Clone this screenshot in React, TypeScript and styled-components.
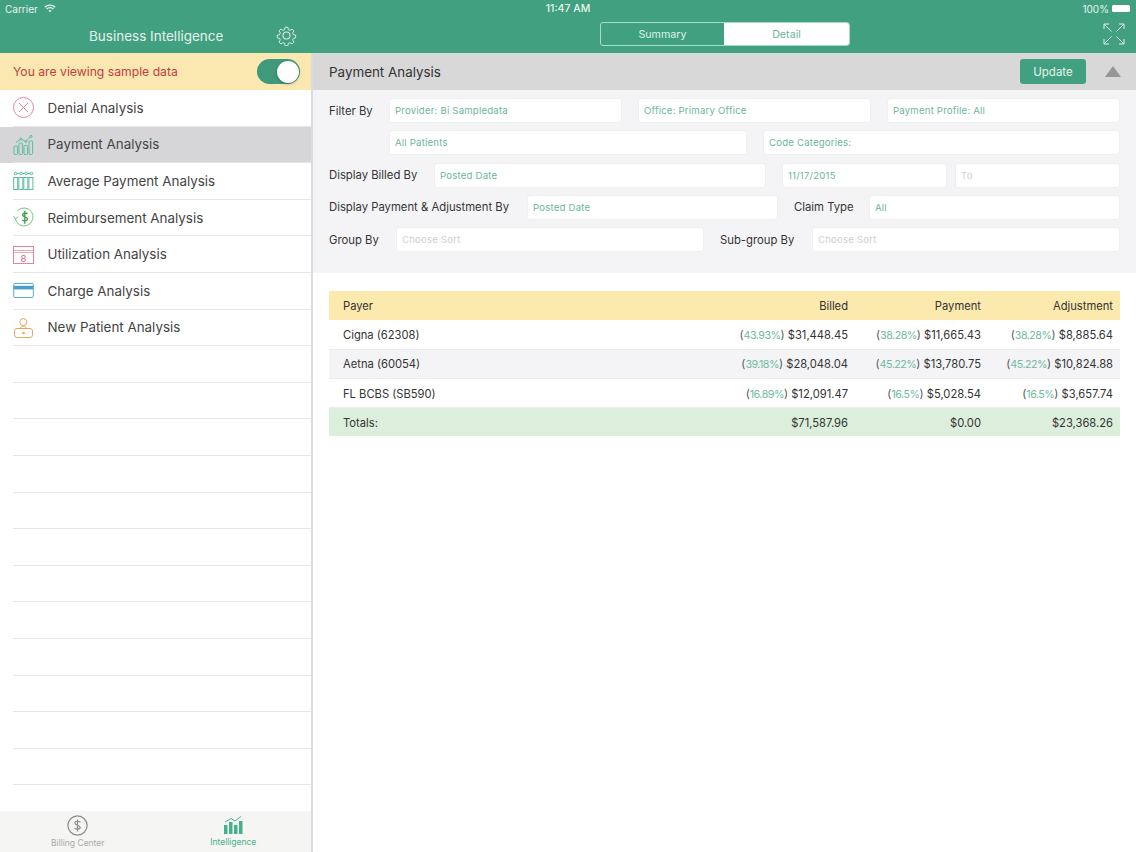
import React from "react";
import styled, { createGlobalStyle } from "styled-components";

const GlobalStyle = createGlobalStyle`
  html, body {
    margin: 0;
    padding: 0;
    background: #fff;
    font-family: Inter, "Noto Sans", "Liberation Sans", sans-serif;
  }
  * { box-sizing: border-box; }
`;

const Page = styled.div`
  width: 1136px;
  height: 852px;
  display: flex;
  flex-direction: column;
  overflow: hidden;
`;

const TopBar = styled.header`
  height: 53px;
  flex: none;
  background: #41a07f;
  color: #fff;
  display: flex;
  flex-direction: column;
`;

const StatusBar = styled.div`
  height: 17px;
  padding: 0 5px;
  display: grid;
  grid-template-columns: 1fr auto 1fr;
  align-items: center;
  font-size: 10px;
  color: #e9f5f0;
`;

const StatusLeft = styled.div`
  display: flex;
  align-items: center;
  gap: 6px;
`;

const Clock = styled.div`
  font-weight: 500;
  font-size: 10.5px;
`;

const StatusRight = styled.div`
  display: flex;
  align-items: center;
  justify-content: flex-end;
  gap: 3px;
`;

const Battery = styled.div`
  width: 18px;
  height: 7px;
  background: #fff;
  border-radius: 1.5px;
  margin-right: 1px;
`;

const NavBar = styled.div`
  flex: 1;
  display: flex;
  align-items: center;
`;

const NavLeft = styled.div`
  width: 312px;
  flex: none;
  display: flex;
  align-items: center;
  padding-left: 89px;
  padding-right: 15px;
  padding-top: 1px;
  justify-content: space-between;
`;

const NavTitle = styled.div`
  font-size: 13.5px;
  color: #e6f4ee;
`;

const NavRight = styled.div`
  flex: 1;
  display: flex;
  align-items: center;
  justify-content: space-between;
  padding-left: 288px;
  padding-right: 11px;
`;

const Segments = styled.div`
  width: 250px;
  height: 24px;
  display: flex;
  border: 1px solid #a6dcc8;
  border-radius: 3px;
  overflow: hidden;
  margin-bottom: 2px;
`;

const Segment = styled.div<{ $active?: boolean }>`
  flex: ${(p) => (p.$active ? "0 0 125px" : "1")};
  display: flex;
  align-items: center;
  justify-content: center;
  font-size: 10.7px;
  background: ${(p) => (p.$active ? "#fff" : "transparent")};
  color: ${(p) => (p.$active ? "#6fb59c" : "#dff1ea")};
`;

const ExpandWrap = styled.div`
  margin-bottom: 3px;
  svg {
    display: block;
  }
`;

const Body = styled.div`
  flex: 1;
  display: flex;
  min-height: 0;
`;

const Sidebar = styled.aside`
  width: 313px;
  flex: none;
  border-right: 2px solid #dcdcde;
  display: flex;
  flex-direction: column;
`;

const SampleBanner = styled.div`
  height: 37px;
  flex: none;
  background: #fbe8b0;
  padding: 0 11px 0 13px;
  display: flex;
  align-items: center;
  justify-content: space-between;
  font-size: 12.2px;
  color: #c43c44;
`;

const Toggle = styled.div`
  width: 43px;
  height: 25px;
  border-radius: 13px;
  background: #3f9a7b;
  padding: 1.5px;
  display: flex;
  justify-content: flex-end;
`;

const Knob = styled.div`
  width: 22px;
  height: 22px;
  border-radius: 50%;
  background: #fff;
  box-shadow: 0 1px 3px rgba(0, 0, 0, 0.3);
`;

const MenuList = styled.div`
  flex: 1;
  min-height: 0;
  overflow: hidden;
`;

const MenuRow = styled.div<{ $selected?: boolean }>`
  height: 36.6px;
  padding-left: 13px;
  background: ${(p) => (p.$selected ? "#d6d6d8" : "#fff")};
`;

const MenuInner = styled.div`
  height: 100%;
  display: flex;
  align-items: center;
  gap: 13.5px;
  border-bottom: 1px solid #e6e6e8;
`;

const IconSlot = styled.div`
  width: 21px;
  height: 21px;
  flex: none;
  svg {
    display: block;
  }
`;

const MenuLabel = styled.div`
  font-size: 13.4px;
  color: #444;
`;

const TabBar = styled.nav`
  height: 41px;
  flex: none;
  background: #f5f5f4;
  display: flex;
`;

const Tab = styled.div<{ $active?: boolean }>`
  flex: 1;
  display: flex;
  flex-direction: column;
  align-items: center;
  padding-top: 4px;
  font-size: 8.5px;
  gap: 2px;
  color: ${(p) => (p.$active ? "#46b08c" : "#aaa")};
`;

const Main = styled.main`
  flex: 1;
  min-width: 0;
  display: flex;
  flex-direction: column;
`;

const MainHeader = styled.div`
  height: 37px;
  flex: none;
  background: #d8d8d8;
  padding: 0 14px 0 16px;
  display: flex;
  align-items: center;
  justify-content: space-between;
  font-size: 13.4px;
  color: #333;
`;

const HeaderActions = styled.div`
  display: flex;
  align-items: center;
  gap: 19px;
`;

const UpdateButton = styled.div`
  width: 66px;
  height: 25px;
  margin-left: -1px;
  background: #41a07f;
  color: #e6f4ee;
  border-radius: 3px;
  font-size: 11.5px;
  display: flex;
  align-items: center;
  justify-content: center;
`;

const Collapse = styled.div`
  width: 0;
  height: 0;
  margin-right: 1px;
  border-left: 8.5px solid transparent;
  border-right: 8.5px solid transparent;
  border-bottom: 11px solid #969696;
`;

const FilterPanel = styled.section`
  height: 183px;
  flex: none;
  background: #f4f4f6;
  padding: 8px 16px 0;
  display: flex;
  flex-direction: column;
  gap: 7.3px;
`;

const FilterRow = styled.div`
  display: flex;
  align-items: center;
  height: 25px;
`;

const FieldLabel = styled.div<{ $w: number }>`
  flex: 0 0 ${(p) => p.$w}px;
  font-size: 11.3px;
  color: #333;
  white-space: nowrap;
`;

const Field = styled.div<{ $w: number; $gap?: number; $muted?: boolean }>`
  flex: 0 0 ${(p) => p.$w}px;
  margin-right: ${(p) => p.$gap ?? 0}px;
  height: 25px;
  background: #fff;
  border: 1px solid #efeff1;
  border-radius: 3px;
  padding: 0 5px;
  display: flex;
  align-items: center;
  font-size: 9.6px;
  letter-spacing: 0.2px;
  color: ${(p) => (p.$muted ? "#d0d0d2" : "#6cb69b")};
`;

const TableArea = styled.section`
  padding: 18px 16px 0;
`;

const Row = styled.div<{ $kind?: "head" | "alt" | "total" }>`
  height: ${(p) => (p.$kind === "total" ? 28 : 29.3)}px;
  display: grid;
  grid-template-columns: 1fr 133px 133px 132px;
  align-items: center;
  padding: 1px 7px 0 14px;
  font-size: 11.2px;
  color: #333;
  border-bottom: ${(p) =>
    p.$kind === "head" || p.$kind === "total" ? "none" : "1px solid #ececee"};
  background: ${(p) =>
    p.$kind === "head"
      ? "#fbe9ae"
      : p.$kind === "alt"
        ? "#f4f4f6"
        : p.$kind === "total"
          ? "#dcefdc"
          : "#fff"};
`;

const Num = styled.div`
  text-align: right;
  white-space: nowrap;
`;

const Pct = styled.span`
  color: #6fbb9f;
  font-size: 10.7px;
  letter-spacing: -0.5px;
`;

const Paren = styled.span`
  color: #555;
`;

const Wifi = () => (
  <svg width="12" height="9" viewBox="0 0 12 9" fill="none" stroke="#e9f5f0" strokeWidth="1.3">
    <path d="M.8 3.2a7.4 7.4 0 0 1 10.4 0M2.6 5a4.8 4.8 0 0 1 6.8 0" />
    <path d="M4.5 6.7a2.2 2.2 0 0 1 3 0L6 8.3z" fill="#e9f5f0" stroke="none" />
  </svg>
);

const Gear = () => (
  <svg width="21" height="21" viewBox="0 0 24 24" fill="none" stroke="#dff1ea" strokeWidth="1.2" strokeLinejoin="round">
    <circle cx="12" cy="12" r="4" />
    <path d="M10.2 1.5h3.6l.6 3 2.1.9 2.6-1.7 2.5 2.5-1.7 2.6.9 2.1 3 .6v3.6l-3 .6-.9 2.1 1.7 2.6-2.5 2.5-2.6-1.7-2.1.9-.6 3h-3.6l-.6-3-2.1-.9-2.6 1.7-2.5-2.5 1.7-2.6-.9-2.1-3-.6v-3.6l3-.6.9-2.1-1.7-2.6 2.5-2.5 2.6 1.7 2.1-.9z" transform="translate(1.3 1.3) scale(.89)" />
  </svg>
);

const Expand = () => (
  <svg width="22" height="22" viewBox="0 0 22 22" fill="none" stroke="#dff1ea" strokeWidth="1">
    <path d="M1 6V1h5M1 1l7.500 7.500M16 1h5v5M21 1l-7.500 7.500M1 16v5h5M1 21l7.500-7.500M16 21h5v-5M21 21l-7.500-7.500" />
  </svg>
);

const DenialIcon = () => (
  <svg width="21" height="21" viewBox="0 0 21 21" fill="none" stroke="#e58592" strokeWidth="1">
    <circle cx="10.5" cy="10.5" r="10" />
    <path d="M6 6l9 9M15 6l-9 9" />
  </svg>
);

const PaymentIcon = () => (
  <svg width="21" height="21" viewBox="0 0 21 21" fill="none" stroke="#5bbd9b" strokeWidth="1">
    <rect x="1" y="12" width="3.6" height="8.500" rx="1" />
    <rect x="6" y="9" width="3.6" height="11.500" rx="1" />
    <rect x="11" y="11.500" width="3.6" height="9" rx="1" />
    <rect x="16" y="7" width="3.6" height="13.500" rx="1" />
    <path d="M2.800 8.500L7.800 5l5 2.500 5-5" />
    <circle cx="7.800" cy="5" r="1" fill="#d6d6d8" />
    <circle cx="12.800" cy="7.500" r="1" fill="#d6d6d8" />
    <circle cx="18" cy="2.300" r="1" fill="#d6d6d8" />
  </svg>
);

const AverageIcon = () => (
  <svg width="21" height="21" viewBox="0 0 21 21" fill="none" stroke="#5bbd9b" strokeWidth="1">
    <path d="M1 3.500h19" />
    <circle cx="2.500" cy="3.500" r="1.300" fill="#fff" />
    <circle cx="8" cy="3.500" r="1.300" fill="#fff" />
    <circle cx="13" cy="3.500" r="1.300" fill="#fff" />
    <circle cx="18.500" cy="3.500" r="1.300" fill="#fff" />
    <rect x=".7" y="7.500" width="4" height="12" />
    <rect x="5.800" y="7.500" width="4" height="12" />
    <rect x="10.800" y="7.500" width="4" height="12" />
    <rect x="15.900" y="7.500" width="4" height="12" />
  </svg>
);

const ReimburseIcon = () => (
  <svg width="21" height="21" viewBox="0 0 21 21" fill="none" stroke="#74c47c" strokeWidth="1">
    <path d="M4.500 3.800a9 9 0 1 1-2.300 7.700" />
    <path d="M.5 9.200L2.300 12l3-2.300" />
    <path d="M14.500 7c-.8-1.200-4.400-1.500-4.800.6-.5 2.700 5.100 2 4.700 4.800-.3 1.900-4.200 1.800-5.100.5M11.800 3.800v13" strokeWidth="1.400" stroke="#48a052" />
  </svg>
);

const CalendarIcon = () => (
  <svg width="21" height="21" viewBox="0 0 21 21" fill="none" stroke="#e58592" strokeWidth="1">
    <rect x=".5" y="2.500" width="20" height="17" />
    <path d="M.5 8.500h20M.5 6.500h20" strokeWidth=".7" />
    <text x="10.500" y="17.800" textAnchor="middle" fontSize="9.500" fontFamily="Inter" fill="#d9606e" stroke="none">8</text>
  </svg>
);

const CardIcon = () => (
  <svg width="21" height="21" viewBox="0 0 21 21" fill="none">
    <rect x=".7" y="3.500" width="19.600" height="14" rx="1.200" stroke="#5fa9d0" strokeWidth="1" />
    <rect x=".7" y="5.800" width="19.600" height="3.600" fill="#4b9fd0" />
  </svg>
);

const PatientIcon = () => (
  <svg width="21" height="21" viewBox="0 0 21 21" fill="none" stroke="#e8a657" strokeWidth="1">
    <circle cx="10.300" cy="5" r="3.500" />
    <rect x="1.500" y="11.500" width="18" height="9" rx="2.500" />
    <path d="M7 11.500c.5-1.500 1.800-2.200 3.300-2.200s2.800.7 3.300 2.200" />
    <circle cx="10.500" cy="16" r="1.300" fill="#e8a657" stroke="none" />
  </svg>
);

const DollarTab = () => (
  <svg width="21" height="21" viewBox="0 0 21 21" fill="none" stroke="#8c8c8c" strokeWidth="1.200">
    <circle cx="10.500" cy="10.500" r="9.600" />
    <path d="M13.400 7.300c-.7-1.300-5.300-1.700-5.500.7-.2 2.700 5.600 1.900 5.300 4.800-.2 1.800-4.700 1.800-5.700.3M10.500 4.600v11.800" />
  </svg>
);

const ChartTab = () => (
  <svg width="20" height="20" viewBox="0 0 20 20">
    <g fill="#46b08c">
      <rect x="1" y="10" width="3.500" height="9" />
      <rect x="6" y="7" width="3.500" height="12" />
      <rect x="11" y="10" width="3.500" height="9" />
      <rect x="16" y="6" width="3.500" height="13" />
    </g>
    <path d="M2 7l6-3.500 4 2.500 6-4.500" fill="none" stroke="#46b08c" strokeWidth="1" />
  </svg>
);

const menu = [
  { label: "Denial Analysis", icon: <DenialIcon /> },
  { label: "Payment Analysis", icon: <PaymentIcon />, selected: true },
  { label: "Average Payment Analysis", icon: <AverageIcon /> },
  { label: "Reimbursement Analysis", icon: <ReimburseIcon /> },
  { label: "Utilization Analysis", icon: <CalendarIcon /> },
  { label: "Charge Analysis", icon: <CardIcon /> },
  { label: "New Patient Analysis", icon: <PatientIcon /> },
];

const blanks = Array.from({ length: 12 }, (_, i) => i);

const rows = [
  { payer: "Cigna (62308)", cells: [["43.93%", "$31,448.45"], ["38.28%", "$11,665.43"], ["38.28%", "$8,885.64"]] },
  { payer: "Aetna (60054)", alt: true, cells: [["39.18%", "$28,048.04"], ["45.22%", "$13,780.75"], ["45.22%", "$10,824.88"]] },
  { payer: "FL BCBS (SB590)", cells: [["16.89%", "$12,091.47"], ["16.5%", "$5,028.54"], ["16.5%", "$3,657.74"]] },
];

export default function App() {
  return (
    <Page>
      <GlobalStyle />
      <TopBar>
        <StatusBar>
          <StatusLeft>
            Carrier <Wifi />
          </StatusLeft>
          <Clock>11:47 AM</Clock>
          <StatusRight>
            100% <Battery />
          </StatusRight>
        </StatusBar>
        <NavBar>
          <NavLeft>
            <NavTitle>Business Intelligence</NavTitle>
            <Gear />
          </NavLeft>
          <NavRight>
            <Segments>
              <Segment>Summary</Segment>
              <Segment $active>Detail</Segment>
            </Segments>
            <ExpandWrap>
              <Expand />
            </ExpandWrap>
          </NavRight>
        </NavBar>
      </TopBar>
      <Body>
        <Sidebar>
          <SampleBanner>
            You are viewing sample data
            <Toggle>
              <Knob />
            </Toggle>
          </SampleBanner>
          <MenuList>
            {menu.map((m) => (
              <MenuRow key={m.label} $selected={m.selected}>
                <MenuInner>
                  <IconSlot>{m.icon}</IconSlot>
                  <MenuLabel>{m.label}</MenuLabel>
                </MenuInner>
              </MenuRow>
            ))}
            {blanks.map((b) => (
              <MenuRow key={b}>
                <MenuInner />
              </MenuRow>
            ))}
          </MenuList>
          <TabBar>
            <Tab>
              <DollarTab />
              Billing Center
            </Tab>
            <Tab $active>
              <ChartTab />
              Intelligence
            </Tab>
          </TabBar>
        </Sidebar>
        <Main>
          <MainHeader>
            Payment Analysis
            <HeaderActions>
              <UpdateButton>Update</UpdateButton>
              <Collapse />
            </HeaderActions>
          </MainHeader>
          <FilterPanel>
            <FilterRow>
              <FieldLabel $w={60}>Filter By</FieldLabel>
              <Field $w={233} $gap={16}>Provider: Bi Sampledata</Field>
              <Field $w={233} $gap={16}>Office: Primary Office</Field>
              <Field $w={233}>Payment Profile: All</Field>
            </FilterRow>
            <FilterRow>
              <FieldLabel $w={60} />
              <Field $w={358} $gap={16}>All Patients</Field>
              <Field $w={357}>Code Categories:</Field>
            </FilterRow>
            <FilterRow>
              <FieldLabel $w={105}>Display Billed By</FieldLabel>
              <Field $w={332} $gap={16}>Posted Date</Field>
              <Field $w={165} $gap={8}>11/17/2015</Field>
              <Field $w={165} $muted>To</Field>
            </FilterRow>
            <FilterRow>
              <FieldLabel $w={198}>Display Payment &amp; Adjustment By</FieldLabel>
              <Field $w={251} $gap={16}>Posted Date</Field>
              <FieldLabel $w={75}>Claim Type</FieldLabel>
              <Field $w={251}>All</Field>
            </FilterRow>
            <FilterRow>
              <FieldLabel $w={67}>Group By</FieldLabel>
              <Field $w={308} $gap={16} $muted>Choose Sort</Field>
              <FieldLabel $w={92}>Sub-group By</FieldLabel>
              <Field $w={308} $muted>Choose Sort</Field>
            </FilterRow>
          </FilterPanel>
          <TableArea>
            <Row $kind="head">
              <div>Payer</div>
              <Num>Billed</Num>
              <Num>Payment</Num>
              <Num>Adjustment</Num>
            </Row>
            {rows.map((r) => (
              <Row key={r.payer} $kind={r.alt ? "alt" : undefined}>
                <div>{r.payer}</div>
                {r.cells.map(([pct, amount]) => (
                  <Num key={amount}>
                    <Paren>(</Paren>
                    <Pct>{pct}</Pct>
                    <Paren>)</Paren> {amount}
                  </Num>
                ))}
              </Row>
            ))}
            <Row $kind="total">
              <div>Totals:</div>
              <Num>$71,587.96</Num>
              <Num>$0.00</Num>
              <Num>$23,368.26</Num>
            </Row>
          </TableArea>
        </Main>
      </Body>
    </Page>
  );
}
